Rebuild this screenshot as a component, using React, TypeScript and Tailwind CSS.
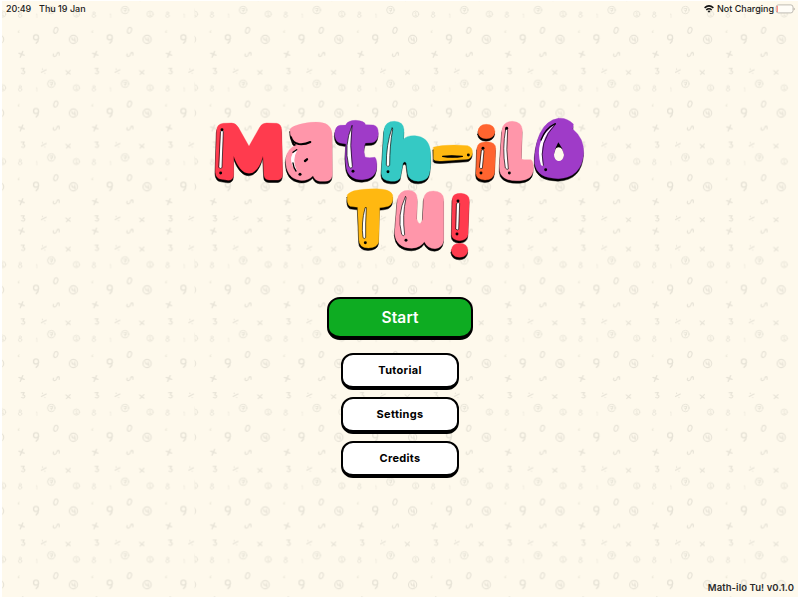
import React from "react";

const CREAM = "#fef9ec";
const P = 73.72;

function Doodles({ id, x, y }: { id: string; x: number; y: number }) {
  return (
    <pattern id={id} patternUnits="userSpaceOnUse" x={x} y={y} width={P} height={P} viewBox={`10 3 ${P} ${P}`}>
      <g fill="none" stroke="#e6e2d6" strokeWidth="1.1" strokeLinecap="round" strokeLinejoin="round">
        <g strokeWidth="0.9" opacity="0.8">
          <ellipse cx="20.2" cy="12.9" rx="1.2" ry="1.1" />
          <ellipse cx="20.1" cy="15.8" rx="1.7" ry="1.6" />
        </g>
        <path d="M36.3 14.2l.6-.4v3.8" strokeWidth="0.6" opacity="0.8" />
        <circle cx="51.2" cy="10" r="3.7" strokeWidth="0.9" />
        <path d="M49.8 8.8l3-.5-1.5 3.8M50.6 10.5l1.8-.2" strokeWidth="0.9" />
        <circle cx="76.4" cy="14.1" r="3.1" strokeWidth="0.8" />
        <path d="M75.6 13l1-.6v3.4M75.6 15.8h1.8" strokeWidth="0.7" />
        <path d="M19 30.4q-1.2 1-.9 1.8.9.7 1.3-.1-.2-.8-1.2-.3" strokeWidth="0.6" />
        <ellipse cx="55.8" cy="30.3" rx="2" ry="3.1" transform="rotate(16 55.8 30.3)" />
        <circle cx="36" cy="37.3" r="2.5" strokeWidth="1.3" />
        <path d="M38.5 38q0 3.5-2.4 5.2" strokeWidth="1.3" />
        <circle cx="73.4" cy="39.4" r="4.1" />
        <path d="M71.7 37.6l.5 2.2 2.9.2M74.6 37.7l.3 4" />
        <path d="M18.9 53.3l5.3 1.8M22.8 51.4l-2.6 5.8" strokeWidth="1.3" />
        <path d="M59.1 55.2q.5-2.9-.9-2.8-1.3.2-1.6 2.3-.7 2.1-2.5 1.7-1.7-.8-.5-2.5" strokeWidth="1.1" />
        <path d="M21.1 68.5l3.2-.2-1.5 2.4q2.4 0 2 1.8-.9 1.9-3.2.8" />
        <path d="M41.4 72.3l4.8-2.5M42.4 69l.1.1M44.8 73.3l.1.1" strokeWidth="1.2" />
        <path d="M65.8 70.6l4.4 3.4M70.2 70.4l-3.8 4" />
      </g>
    </pattern>
  );
}

function Backdrop() {
  return (
    <svg className="absolute inset-0" width="803" height="600" aria-hidden="true">
      <defs>
        <Doodles id="d00" x={10} y={3} />
        <Doodles id="d10" x={201.8} y={3} />
        <Doodles id="d01" x={10} y={253.5} />
        <Doodles id="d11" x={201.8} y={253.5} />
      </defs>
      <rect x="2" y="1" width="796" height="596" fill={CREAM} />
      <rect x="2" y="1" width="192.5" height="223" fill="url(#d00)" />
      <rect x="194.5" y="1" width="603.5" height="223" fill="url(#d10)" />
      <rect x="2" y="224" width="192.5" height="373" fill="url(#d01)" />
      <rect x="194.5" y="224" width="603.5" height="373" fill="url(#d11)" />
    </svg>
  );
}

type BubbleProps = {
  d: string;
  color: string;
  shine?: string;
  dots?: [number, number][];
  children?: React.ReactNode;
};

function Bubble({ d, color, shine, dots = [], children }: BubbleProps) {
  return (
    <g strokeLinejoin="round" strokeLinecap="round">
      <path d={d} fill="#000" stroke="#000" strokeWidth="1.5" transform="translate(-1 7.5)" fillRule="evenodd" />
      <path d={d} fill={color} stroke={color} strokeWidth="1" fillRule="evenodd" />
      {shine && <path d={shine} fill="#fff" stroke="#000" strokeWidth="2" />}
      {dots.map(([x, y]) => (
        <circle key={`${x}-${y}`} cx={x} cy={y} r="4.4" fill="#000" />
      ))}
      {children}
    </g>
  );
}

function Logo() {
  return (
    <svg className="block" width="390" height="160" viewBox="205 110 390 160" role="img" aria-label="Math-ilo Tu!">
      <g transform="translate(205 110) scale(.33333)">
        <Bubble
          color="#ff3b4e"
          d="M35 60Q36 42 55 40L80 39Q92 39 100 52L132 109L165 50Q172 39 185 39L215 40Q229 42 230 60L233 190Q233 208 220 210L192 210Q178 209 177 195L174 138Q160 189 132 190Q104 189 86 138L86 195Q85 210 70 211L50 208Q32 206 31 185Z"
          shine="M47 64Q51 58 55 64L51 173Q47 178 42 173Z"
          dots={[[51, 59], [47, 189]]}
        />
        <Bubble
          color="#ff96aa"
          d="M255 58Q264 44 318 37Q378 31 381 70L382 195Q380 214 360 214L345 214Q330 212 324 197Q310 213 285 211Q242 205 242 150Q244 115 275 105Q262 100 260 85Q254 70 255 58Z"
        >
          <path d="M258 82Q262 99 281 102Q300 104 316 96" fill="none" stroke="#000" strokeWidth="6" />
          <path d="M274 121Q247 145 273 181Q258 150 274 121" fill="#fff" stroke="#fff" strokeWidth="4" />
          <path d="M275 119L264 127M264 159Q266 175 273 183" fill="none" stroke="#000" strokeWidth="4" />
          <path d="M300 153L306 148" stroke="#000" strokeWidth="7" />
          <circle cx="285" cy="193" r="4.6" />
        </Bubble>
      </g>
      <g transform="translate(325 110) scale(.33333)">
        <Bubble
          color="#9f3bc8"
          d="M62 45Q68 31 92 31Q118 32 122 44L145 45Q161 48 160 72Q157 97 140 98L121 99Q113 118 120 141Q130 145 150 142Q157 150 155 175Q150 208 112 209Q72 210 64 175Q58 140 63 102L45 99Q30 95 29 72Q30 48 45 46Z"
          shine="M81 47Q56 105 71 168Q78 180 82 170Q73 105 81 47Z"
          dots={[[84, 184]]}
        />
        <Bubble
          color="#35c9c4"
          d="M177 60Q180 34 208 34Q236 35 237 60L236 88Q245 76 270 77Q310 80 316 120Q320 170 312 195Q305 213 280 214Q252 213 248 192L244 160Q240 150 234 160Q230 180 226 203Q220 215 198 214Q170 213 169 190Z"
          shine="M201 54Q183 105 184 165Q188 174 194 166Q194 105 203 58Z"
          dots={[[189, 185]]}
        />
      </g>
      <g transform="translate(425 110) scale(.33333)">
        <Bubble
          color="#ffb811"
          d="M25 112Q60 102 128 107Q145 113 142 132Q138 147 125 148L50 153Q28 154 26 148Z"
          dots={[[130, 135]]}
        >
          <path d="M53 139Q78 136 112 139Q82 144 53 139" fill="#000" stroke="#000" strokeWidth="4" />
        </Bubble>
        <Bubble color="#ff642f" d="M159 66Q160 43 184 43Q209 44 210 65Q207 85 184 86Q160 85 159 66Z" />
        <Bubble
          color="#ff642f"
          d="M156 113Q158 95 185 95Q212 96 212 115L209 185Q207 209 180 210Q153 209 153 190Z"
          shine="M170 120Q175 117 177 122L172 175Q167 178 164 173Z"
          dots={[[174, 115], [168, 189]]}
        />
        <Bubble
          color="#ff96aa"
          d="M231 60Q234 34 262 34Q291 36 292 60L289 145Q290 150 300 149L318 149Q326 153 325 180Q322 210 285 212Q240 215 227 192Q222 180 224 160Z"
          shine="M242 58Q246 52 248 60Q242 120 250 177Q247 181 241 174Q231 115 242 58Z"
          dots={[[245, 55], [253, 189]]}
        />
        <Bubble
          color="#9f3bc8"
          d="M400 25Q425 22 445 42Q445 50 443 57Q478 85 476 130Q470 203 400 206Q335 206 329 160Q327 110 345 70Q365 30 400 25ZM400 101Q388 118 388 135Q390 151 401 153Q415 151 416 135Q415 118 400 101Z"
          dots={[[362, 179]]}
        >
          <path d="M390 42Q324 91 348 166L355 168Q338 91 390 42" fill="#fff" />
          <path d="M391 41Q361 55 348 90" fill="none" stroke="#000" strokeWidth="4" />
          <path d="M391 43Q339 96 355 166" fill="none" stroke="#000" strokeWidth="2" />
          <path d="M400 102Q389 118 387 134Q388 150 401 153Q415 151 417 135Q414 118 400 102Z" fill={CREAM} />
          <path d="M390 118L400 97L413 118Q400 106 390 118Z" fill="#000" />
        </Bubble>
      </g>
      <g transform="translate(335 180) scale(.33333)">
        <Bubble
          color="#ffb811"
          d="M37 45Q45 29 100 27Q165 22 173 45Q177 70 160 79Q145 83 134 83L131 185Q128 203 100 204Q72 203 72 180L68 82L45 79Q34 72 37 45Z"
          shine="M90 84Q78 130 84 173Q88 178 92 173Q91 130 94 84Z"
          dots={[[91, 188]]}
        />
        <Bubble
          color="#ff96aa"
          d="M187 60Q192 31 220 31Q247 32 247 58L245 116Q254 144 263 118L266 55Q270 33 295 33Q325 34 326 58L326 180Q323 204 300 206Q278 206 268 185Q258 202 230 205Q182 204 179 160Z"
          shine="M211 50Q185 105 200 163Q205 171 209 164Q201 105 213 55Z"
          dots={[[213, 181]]}
        />
        <Bubble
          color="#ff3b4e"
          d="M352 55Q354 40 378 40Q402 42 403 60L399 163Q397 181 374 182Q350 181 350 163Z"
          shine="M365 70Q370 64 374 70L371 148Q367 152 363 148Z"
          dots={[[369, 63], [366, 162]]}
        />
        <Bubble color="#ff3b4e" d="M349 211Q351 190 374 190Q398 191 399 211Q396 231 374 232Q351 231 349 211Z" />
      </g>
    </svg>
  );
}

function StatusBar() {
  return (
    <header className="flex h-[14px] items-center justify-between pl-1 pr-px pt-[1px] text-[9px] font-medium leading-none text-[#202020]">
      <div className="flex gap-[7px]">
        <span className="w-[26px] tracking-[-0.1px]">20:49</span>
        <span>Thu 19 Jan</span>
      </div>
      <div className="flex items-center">
        <svg width="10" height="8" viewBox="0 0 10 8" fill="none" stroke="#111" strokeWidth="1.5" className="mr-[3px]">
          <path d="M.6 2.9Q5-1.1 9.4 2.9M2.3 4.9Q5 2.5 7.7 4.9" />
          <path d="M3.5 6.1Q5 4.9 6.5 6.1L5 7.7Z" fill="#111" stroke="none" />
        </svg>
        <span>Not Charging</span>
        <svg width="20" height="10" viewBox="0 0 20 10" className="ml-[1px] mr-[2px]">
          <rect x="1.2" y=".9" width="16.8" height="8" rx="2.2" fill="#fffdf7" stroke="#b0aca5" strokeWidth=".8" />
          <rect x="1.7" y="2" width="1.1" height="6" fill="#ff7a70" />
          <path d="M18.8 3.5Q20.4 5 18.8 6.5Z" fill="#8e8a84" />
        </svg>
      </div>
    </header>
  );
}

function MenuButton({ children }: { children: string }) {
  return (
    <button className="flex h-[37px] w-[118px] items-center justify-center rounded-[12px] border-2 border-b-[4px] border-black bg-white text-[11px] font-bold leading-none tracking-[0.3px] text-black">
      {children}
    </button>
  );
}

export default function App() {
  return (
    <div className="relative h-[600px] w-[803px] overflow-hidden bg-white font-['Inter',sans-serif]">
      <Backdrop />
      <div className="relative flex h-[600px] flex-col pb-[3px] pl-[2px] pr-[5px] pt-[1px]">
        <StatusBar />
        <main className="flex flex-1 flex-col items-center pt-[95px]">
          <Logo />
          <nav className="mt-[27px] flex flex-col items-center gap-[7px]">
            <button className="mb-[6px] flex h-[43px] w-[146px] items-center justify-center rounded-[13px] border-2 border-b-[4px] border-black bg-[#0eac22] pt-px text-[15.5px] font-semibold leading-none tracking-[0.15px] text-white">
              Start
            </button>
            <MenuButton>Tutorial</MenuButton>
            <MenuButton>Settings</MenuButton>
            <MenuButton>Credits</MenuButton>
          </nav>
        </main>
        <footer className="flex h-[19px] items-center justify-end pr-[4px] text-[9.5px] font-semibold leading-none tracking-[0.08px] text-[#2c2c2c]">
          Math-ilo Tu! v0.1.0
        </footer>
      </div>
    </div>
  );
}
